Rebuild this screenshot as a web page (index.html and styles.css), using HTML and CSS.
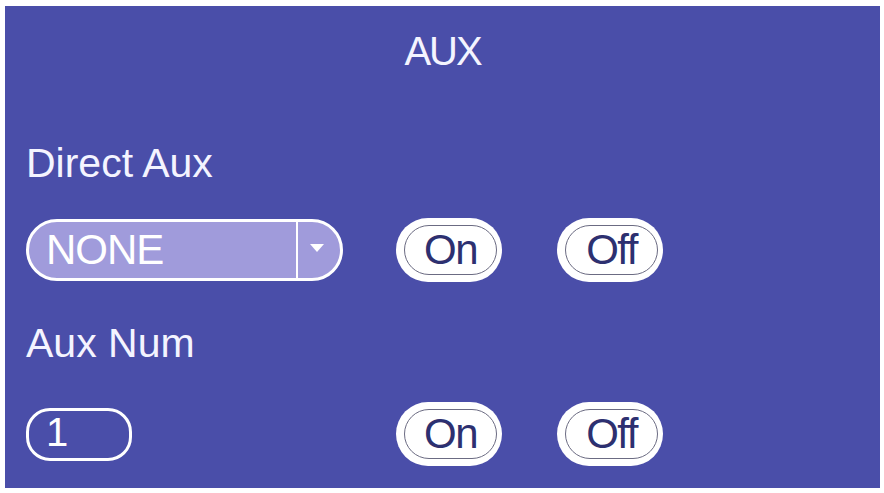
FILE: index.html
```html
<!DOCTYPE html>
<html lang="en">
<head>
  <meta charset="UTF-8" />
  <meta name="viewport" content="width=device-width, initial-scale=1" />
  <title>AUX</title>
  <link rel="stylesheet" href="styles.css">
</head>
<body>

  <div class="panel">
    <h1 class="title">AUX</h1>

    <div class="label label-first">Direct Aux</div>
    <div class="row">
      <div class="select">
        <span class="select-value">NONE</span>
        <span class="select-arrow">
          <svg width="14" height="8" viewBox="0 0 14 8"><path d="M0 0 L14 0 L7 8 Z" fill="#fff"/></svg>
        </span>
      </div>
      <button class="btn"><span>On</span></button>
      <button class="btn"><span>Off</span></button>
    </div>

    <div class="label label-second">Aux Num</div>
    <div class="row row-second">
      <div class="num">1</div>
      <button class="btn"><span>On</span></button>
      <button class="btn"><span>Off</span></button>
    </div>
  </div>

</body>
</html>
```

FILE: styles.css
```css
body {
  margin: 0;
  background: #ffffff;
  font-family: 'Liberation Sans', Arial, sans-serif;
}

.panel {
  margin: 6px 4px 0 5px;
  height: 482px;
  box-sizing: border-box;
  padding: 25px 0 0 21px;
  background: #4a4ea9;
  color: #f4f4ff;
}

.title {
  margin: 0 0 0 -21px;
  font-size: 40px;
  font-weight: normal;
  line-height: 40px;
  letter-spacing: -2px;
  text-align: center;
}

.label {
  font-size: 41px;
  line-height: 40px;
}

.label-first {
  margin-top: 72px;
}

.label-second {
  margin-top: 41px;
}

.row {
  display: grid;
  grid-template-columns: 370px 161px auto;
  align-items: center;
  margin-top: 35px;
}

.row-second {
  margin-top: 39px;
}

.select {
  width: 317px;
  height: 62px;
  box-sizing: border-box;
  display: flex;
  border: 3px solid #ffffff;
  border-radius: 31px;
  background: #a09bdb;
  overflow: hidden;
}

.select-value {
  flex: 1;
  display: flex;
  align-items: center;
  padding-left: 17px;
  font-size: 42px;
  letter-spacing: -1px;
  color: #ffffff;
}

.select-arrow {
  width: 38px;
  display: flex;
  align-items: center;
  justify-content: center;
  border-left: 2px solid #ffffff;
  padding-right: 4px;
  padding-bottom: 4px;
}

.btn {
  width: 106px;
  height: 64px;
  box-sizing: border-box;
  padding: 7px 5px 7px 8px;
  border: none;
  border-radius: 32px;
  background: #ffffff;
  font-family: inherit;
  cursor: pointer;
}

.btn span {
  display: flex;
  align-items: center;
  justify-content: center;
  height: 100%;
  box-sizing: border-box;
  border: 1.5px solid #6b6b82;
  border-radius: 25px;
  font-size: 42px;
  letter-spacing: -1.5px;
  color: #2d3070;
}

.num {
  width: 106px;
  height: 53px;
  box-sizing: border-box;
  display: flex;
  align-items: center;
  padding: 0 0 3px 17px;
  border: 3px solid #ffffff;
  border-radius: 24px;
  font-size: 40px;
  color: #ffffff;
}
```
